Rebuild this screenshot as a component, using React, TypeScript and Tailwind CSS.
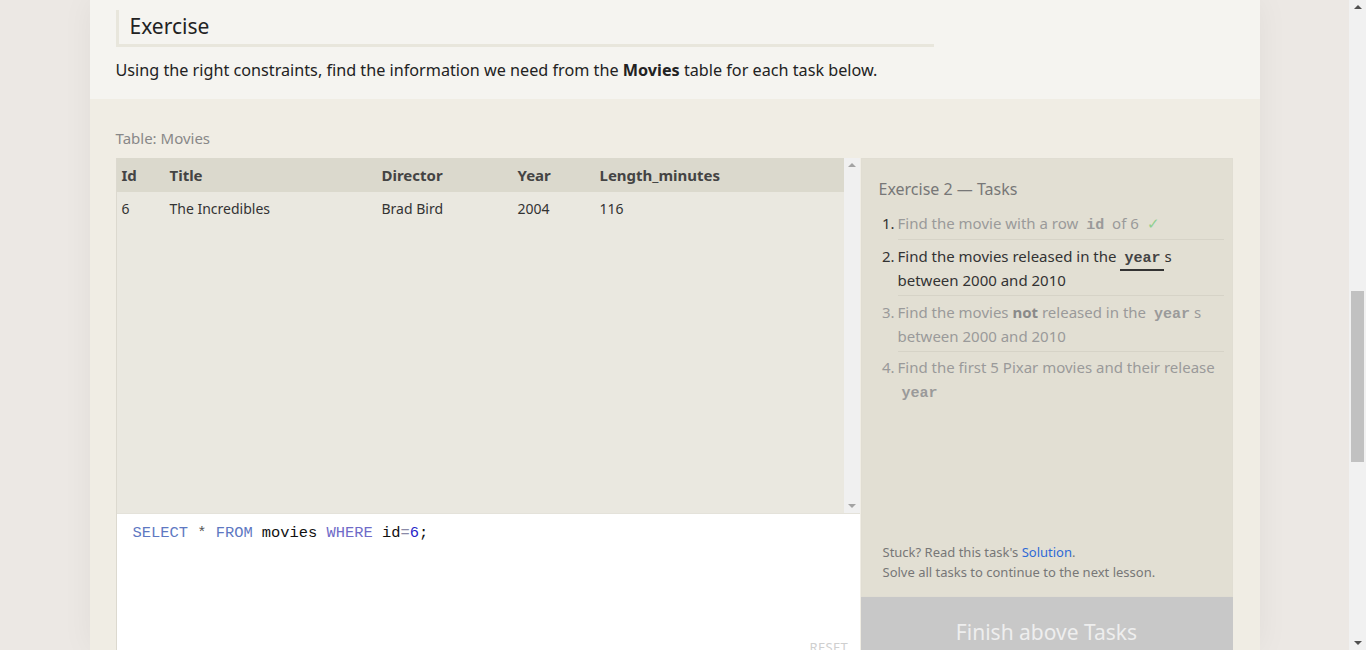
import React from 'react';

const sans = { fontFamily: '"Noto Sans", "Open Sans", sans-serif' };

function Kw({ children, color }: { children: React.ReactNode; color: string }) {
    return <span style={{ color }}>{children}</span>;
}

function Code({ children, dark, underline }: { children: React.ReactNode; dark?: boolean; underline?: boolean }) {
    return (
        <code
            className={
                'px-[4px] font-bold text-[15px] leading-none font-[Liberation_Mono,monospace] ' +
                (dark ? 'text-[#444] ' : 'text-[#9a9a9a] ') +
                (underline ? 'border-b-2 border-[#333] pb-[2px]' : '')
            }
        >
            {children}
        </code>
    );
}

export default function App() {
    return (
        <div className="flex h-[650px] w-[1366px] overflow-hidden bg-[#ece8e4]" style={sans}>
            <div className="flex-1 flex justify-center">
                <div className="w-[1170px] h-[650px] flex flex-col shadow-[0_0_30px_rgba(0,0,0,0.05)]">
                    {/* Intro */}
                    <div className="bg-[#f5f4f0] h-[99px] px-[26px] pt-[10px] shrink-0">
                        <div className="w-[818px] h-[37px] border-l-[3px] border-b-[3px] border-[#e8e6dc] pl-[11px] flex items-center">
                            <h2 className="text-[21px] text-[#222] leading-none -mt-[2px]">Exercise</h2>
                        </div>
                        <p className="mt-[11px] text-[16.2px] text-[#222]">
                            Using the right constraints, find the information we need from the <b>Movies</b> table for each task below.
                        </p>
                    </div>

                    {/* Exercise body */}
                    <div className="flex-1 bg-[#f0ede4] px-[26px] pt-[29px]">
                        <div className="text-[15px] text-[#888] leading-[20px] h-[30px]">Table: Movies</div>
                        <div className="flex gap-[1px]">
                            {/* Left: table + editor */}
                            <div className="w-[744px] flex flex-col border-l border-[#dcd9cf]">
                                <div className="h-[355px] flex bg-[#eae8e0]">
                                    <div className="flex-1">
                                        <div className="h-[34px] bg-[#dbd9cd] flex items-center text-[15px] font-bold text-[#444]">
                                            <div className="w-[53px] pl-[5px]">Id</div>
                                            <div className="w-[212px]">Title</div>
                                            <div className="w-[136px]">Director</div>
                                            <div className="w-[82px]">Year</div>
                                            <div>Length_minutes</div>
                                        </div>
                                        <div className="h-[33px] flex items-center text-[14px] text-[#333]">
                                            <div className="w-[53px] pl-[5px]">6</div>
                                            <div className="w-[212px]">The Incredibles</div>
                                            <div className="w-[136px]">Brad Bird</div>
                                            <div className="w-[82px]">2004</div>
                                            <div>116</div>
                                        </div>
                                    </div>
                                    <div className="w-[16px] bg-[#f0f0f0] flex flex-col justify-between items-center py-[5px]">
                                        <div className="w-0 h-0 border-l-[4px] border-r-[4px] border-b-[4px] border-l-transparent border-r-transparent border-b-[#a3a3a3]" />
                                        <div className="w-0 h-0 border-l-[4px] border-r-[4px] border-t-[4px] border-l-transparent border-r-transparent border-t-[#a3a3a3]" />
                                    </div>
                                </div>
                                <div className="h-[160px] bg-white border-t border-[#e4e2da] relative pl-[16px] pt-[8px]">
                                    <div className="text-[15.4px] leading-[22px] font-[Liberation_Mono,monospace] text-[#111]">
                                        <Kw color="#5e78c2">SELECT</Kw> <Kw color="#555">*</Kw> <Kw color="#5e78c2">FROM</Kw> movies{' '}
                                        <Kw color="#6f6bc8">WHERE</Kw> id<Kw color="#8a8aa8">=</Kw>
                                        <Kw color="#2a1fc9">6</Kw>;
                                    </div>
                                    <div className="absolute left-[693px] top-[124px] text-[13px] text-[#cfcfcf] tracking-wide">RESET</div>
                                </div>
                            </div>

                            {/* Right: tasks */}
                            <div className="w-[372px] flex flex-col">
                                <div className="h-[439px] bg-[#e2dfd3] border border-[#e0ddd2] pl-[17px] pr-[8px] pt-[19px] flex flex-col">
                                    <div className="text-[16px] text-[#777] leading-[22px]">Exercise 2 — Tasks</div>
                                    <ol className="mt-[7px] text-[15px] leading-[24px]">
                                        <li className="flex py-[4px]">
                                            <span className="w-[19px] text-right pr-[3px] text-[#333]">1.</span>
                                            <span className="text-[#9a9a9a]">
                                                Find the movie with a row <Code>id</Code> of 6{' '}
                                                <span className="text-[#8fcf8f] ml-[4px] leading-none">✓</span>
                                            </span>
                                        </li>
                                        <li className="flex pt-[4px] pb-[3px] border-t border-[#d6d3c7] ml-[19px]">
                                            <span className="w-[19px] -ml-[19px] text-right pr-[3px] text-[#333] shrink-0">2.</span>
                                            <span className="text-[#333]">
                                                Find the movies released in the <Code dark underline>year</Code>s between 2000 and 2010
                                            </span>
                                        </li>
                                        <li className="flex pt-[4px] pb-[3px] border-t border-[#d6d3c7] ml-[19px]">
                                            <span className="w-[19px] -ml-[19px] text-right pr-[3px] text-[#9a9a9a] shrink-0">3.</span>
                                            <span className="text-[#9a9a9a]">
                                                Find the movies <b className="text-[#8a8a8a]">not</b> released in the <Code>year</Code>s between 2000 and 2010
                                            </span>
                                        </li>
                                        <li className="flex pt-[3px] pb-[4px] border-t border-[#d6d3c7] ml-[19px]">
                                            <span className="w-[19px] -ml-[19px] text-right pr-[3px] text-[#9a9a9a] shrink-0">4.</span>
                                            <span className="text-[#9a9a9a]">
                                                Find the first 5 Pixar movies and their release <Code>year</Code>
                                            </span>
                                        </li>
                                    </ol>
                                    <div className="mt-auto mb-[14px] pl-[4px] text-[13px] leading-[20px] text-[#777]">
                                        <div>
                                            Stuck? Read this task's <span className="text-[#2e6ad6]">Solution</span>.
                                        </div>
                                        <div>Solve all tasks to continue to the next lesson.</div>
                                    </div>
                                </div>
                                <div className="h-[70px] bg-[#c8c8c8] text-[#eeeeee] text-[21px] flex justify-center pt-[20px]">
                                    Finish above Tasks
                                </div>
                            </div>
                        </div>
                    </div>
                </div>
            </div>

            {/* Page scrollbar */}
            <div className="w-[17px] bg-[#f1f1f1] flex flex-col items-center">
                <div className="h-[14px] flex items-center justify-center">
                    <div className="w-0 h-0 border-l-[4px] border-r-[4px] border-b-[4px] border-l-transparent border-r-transparent border-b-[#505050]" />
                </div>
                <div className="h-[277px]" />
                <div className="w-[13px] h-[171px] bg-[#c1c1c1]" />
                <div className="flex-1" />
                <div className="h-[14px] flex items-center justify-center">
                    <div className="w-0 h-0 border-l-[4px] border-r-[4px] border-t-[4px] border-l-transparent border-r-transparent border-t-[#505050]" />
                </div>
            </div>
        </div>
    );
}
